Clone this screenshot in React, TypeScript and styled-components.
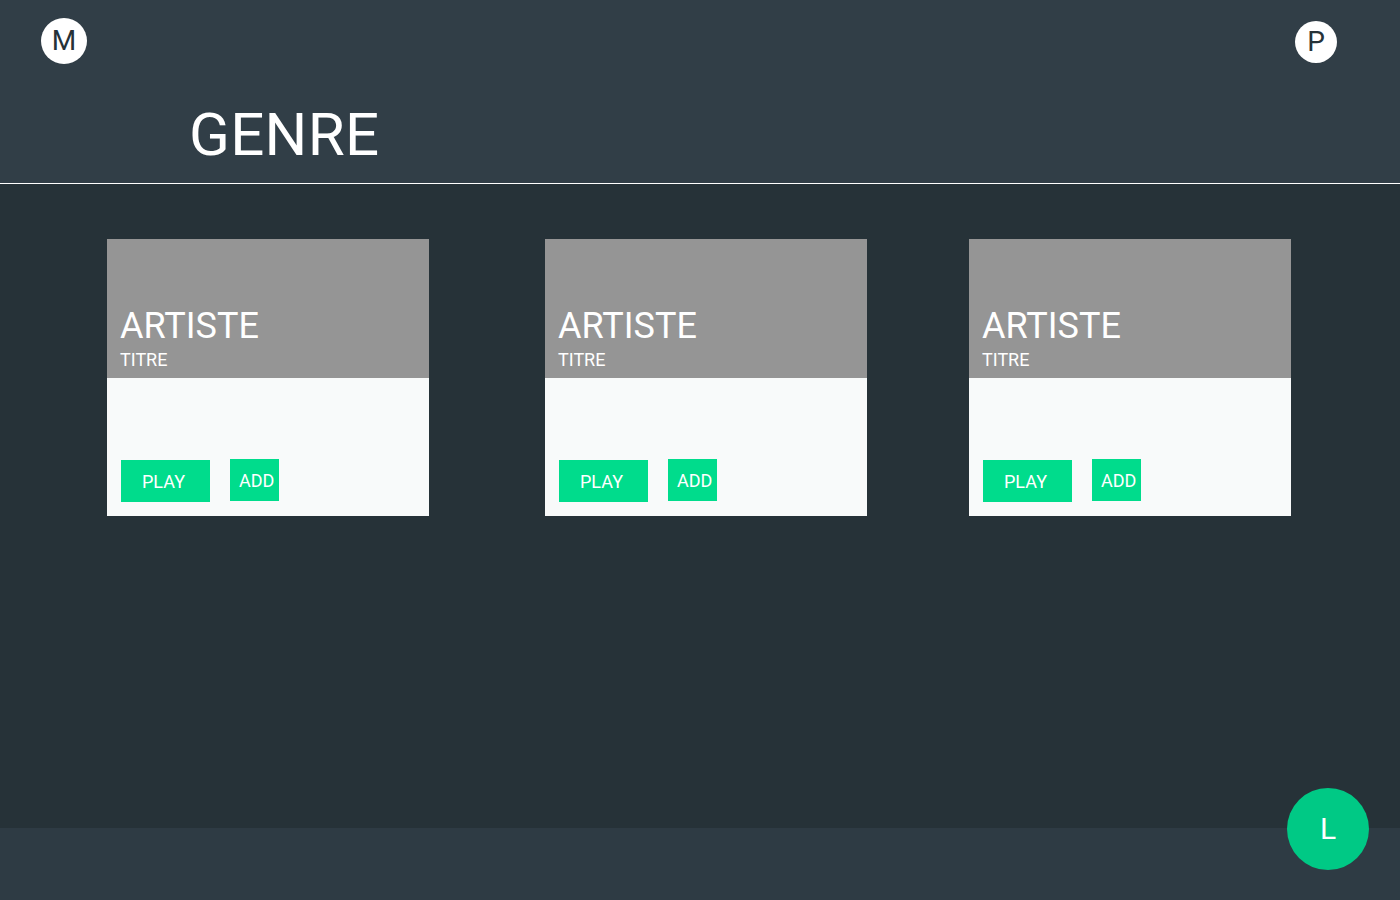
import React from 'react'
import styled, { createGlobalStyle } from 'styled-components'

const GlobalStyle = createGlobalStyle`
  html, body {
    margin: 0;
    padding: 0;
    background: #263238;
  }
  body {
    font-family: Roboto, 'Liberation Sans', sans-serif;
  }
`

const Page = styled.div`
  position: relative;
  width: 1400px;
  height: 900px;
  display: flex;
  flex-direction: column;
  overflow: hidden;
`

const Header = styled.header`
  height: 183px;
  background: #313e47;
  border-bottom: 1px solid #ffffff;
  display: flex;
  flex-direction: column;
`

const TopBar = styled.div`
  display: flex;
  justify-content: space-between;
  align-items: flex-start;
  padding: 18px 63px 0 41px;
`

const Avatar = styled.div<{ size: number; offset?: number }>`
  width: ${({ size }) => size}px;
  height: ${({ size }) => size}px;
  margin-top: ${({ offset }) => offset || 0}px;
  border-radius: 50%;
  background: #ffffff;
  color: #263238;
  display: flex;
  align-items: center;
  justify-content: center;
  font-size: 28px;
  line-height: 1;
`

const Title = styled.h1`
  margin: 36px 0 0 189px;
  font-size: 60px;
  font-weight: 400;
  line-height: 70px;
  letter-spacing: 0.3px;
  color: #ffffff;
`

const Main = styled.main`
  flex: 1;
  display: flex;
  align-items: flex-start;
  padding-top: 55px;
`

const Card = styled.div<{ left: number }>`
  width: 322px;
  height: 277px;
  margin-left: ${({ left }) => left}px;
  display: flex;
  flex-direction: column;
  background: #f8fafa;
`

const Cover = styled.div`
  height: 139px;
  background: #959595;
  display: flex;
  flex-direction: column;
  justify-content: flex-end;
  padding: 0 14px 7px 13px;
  box-sizing: border-box;
  color: #ffffff;
`

const Artist = styled.div`
  font-size: 36px;
  line-height: 40px;
  margin-bottom: 3px;
`

const Track = styled.div`
  font-size: 18px;
  line-height: 22px;
`

const Actions = styled.div`
  flex: 1;
  display: flex;
  align-items: flex-end;
  gap: 20px;
  padding: 0 14px 14px;
`

const Button = styled.button<{ w: number; pad: number; lift?: number }>`
  width: ${({ w }) => w}px;
  height: 42px;
  margin-bottom: ${({ lift }) => lift || 0}px;
  border: none;
  padding: 0 0 0 ${({ pad }) => pad}px;
  background: #00dc8c;
  color: #ffffff;
  font-family: Roboto, 'Liberation Sans', sans-serif;
  font-size: 18px;
  text-align: left;
`

const Footer = styled.footer`
  height: 72px;
  background: #2e3b44;
`

const Fab = styled.div`
  position: absolute;
  left: 1287px;
  top: 788px;
  width: 82px;
  height: 82px;
  border-radius: 50%;
  background: #00c985;
  color: #ffffff;
  display: flex;
  align-items: center;
  justify-content: center;
  font-size: 30px;
  line-height: 1;
`

const cards = [
  { left: 107, artist: 'ARTISTE', title: 'TITRE' },
  { left: 116, artist: 'ARTISTE', title: 'TITRE' },
  { left: 102, artist: 'ARTISTE', title: 'TITRE' },
]

export default function App() {
  return (
    <>
      <GlobalStyle />
      <Page>
        <Header>
          <TopBar>
            <Avatar size={46}>M</Avatar>
            <Avatar size={42} offset={3}>P</Avatar>
          </TopBar>
          <Title>GENRE</Title>
        </Header>
        <Main>
          {cards.map((c, i) => (
            <Card key={i} left={c.left}>
              <Cover>
                <Artist>{c.artist}</Artist>
                <Track>{c.title}</Track>
              </Cover>
              <Actions>
                <Button w={89} pad={21}>PLAY</Button>
                <Button w={49} pad={9} lift={1}>ADD</Button>
              </Actions>
            </Card>
          ))}
        </Main>
        <Footer />
        <Fab>L</Fab>
      </Page>
    </>
  )
}
